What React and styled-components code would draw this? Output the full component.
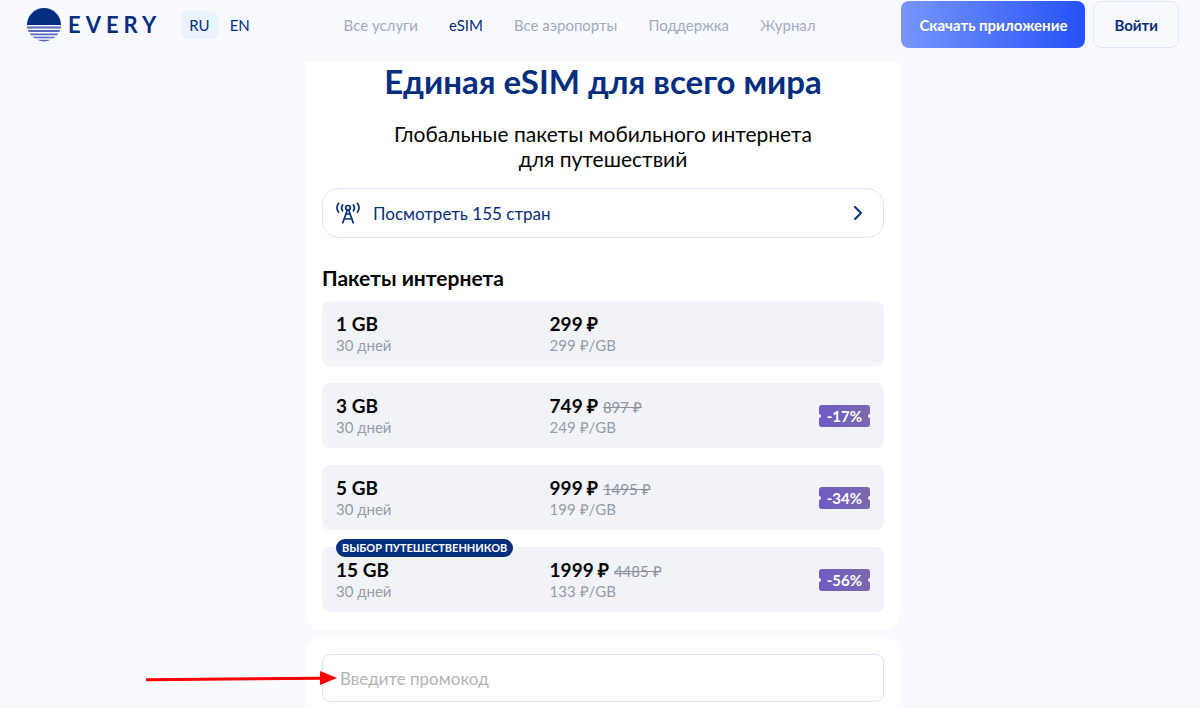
import React from "react";
import styled, { createGlobalStyle, css } from "styled-components";

const navy = "#042e80";

const GlobalStyle = createGlobalStyle`
  *, *::before, *::after { box-sizing: border-box; }
  html { scrollbar-width: none; }
  body {
    margin: 0;
    background: #f9faff;
    color: #050505;
    font-family: Lato, "Liberation Sans", sans-serif;
  }
  button, input { font-family: inherit; }
  a { color: inherit; text-decoration: none; }
  h1, h2, p, ul { margin: 0; padding: 0; }
  ul { list-style: none; }
`;

const Header = styled.header`
  position: sticky;
  top: 0;
  z-index: 5;
  display: flex;
  align-items: center;
  justify-content: space-between;
  height: 62px;
  padding: 0 21px 13px 27px;
  background: #f9faff;
`;

const Group = styled.div`
  display: flex;
  align-items: center;
  gap: ${(p) => p.$gap}px;
`;

const Logo = styled.a`
  display: flex;
  align-items: center;
  gap: 7px;
  color: ${navy};
  font: 700 22px/32px Lato, sans-serif;
  letter-spacing: 5px;
`;

const Languages = styled.div`
  display: flex;
  gap: 4px;
`;

const Language = styled.button`
  height: 28px;
  padding: 0 8px;
  border: 0;
  border-radius: 6px;
  background: ${(p) => (p.$active ? "#ebf3fe" : "transparent")};
  color: ${navy};
  font-size: 15px;
  line-height: 28px;
`;

const Nav = styled.nav`
  display: flex;
  gap: 31px;
`;

const NavLink = styled.a`
  color: ${(p) => (p.$active ? navy : "#a0abc0")};
  font-size: 15px;
  line-height: 20px;
`;

const Button = styled.button`
  height: 47px;
  padding: 0 20px;
  border: 1px solid #e6e6fa;
  border-radius: 8px;
  background: transparent;
  color: ${navy};
  font-size: 15px;
  font-weight: 700;
  ${(p) =>
    p.$primary &&
    css`
      padding: 0 18px;
      border: 0;
      background: linear-gradient(90deg, #7896fb, #2551f7);
      color: #fff;
    `}
`;

const Page = styled.div`
  padding-left: 5px;
`;

const Main = styled.main`
  display: flex;
  flex-direction: column;
  gap: 8px;
  max-width: 595px;
  margin: 0 auto;
`;

const Card = styled.section`
  position: relative;
  padding: ${(p) => (p.$first ? "0 16px 17px 17px" : "17px 16px 17px 17px")};
  border-radius: ${(p) => (p.$first ? "0 0 17px 17px" : "17px")};
  background: #fff;
`;

const Title = styled.h1`
  color: ${navy};
  font-size: 33px;
  line-height: 39px;
  font-weight: 700;
  text-align: center;
`;

const Lead = styled.p`
  max-width: 430px;
  margin: 20px auto 17px;
  font-size: 21px;
  line-height: 25px;
  text-align: center;
`;

const Countries = styled.button`
  display: flex;
  align-items: center;
  gap: 13px;
  width: 100%;
  height: 50px;
  padding: 0 18px 0 13px;
  border: 1px solid #e2e2f6;
  border-radius: 17px;
  background: #fff;
  color: ${navy};
  font-size: 17px;
  text-align: left;
`;

const CountriesText = styled.span`
  flex: 1;
`;

const Subtitle = styled.h2`
  margin: 27px 0 11px;
  font-size: 21px;
  line-height: 25px;
  font-weight: 700;
`;

const Plans = styled.ul`
  display: grid;
  gap: 17px;
`;

const Plan = styled.li`
  position: relative;
  display: grid;
  grid-template-columns: 2fr 2fr 1fr;
  align-items: center;
  height: 65px;
  padding: 0 14px;
  border-radius: 8px;
  background: #f2f3f9;
`;

const PlanMain = styled.p`
  font-size: 19px;
  line-height: 22px;
  font-weight: 700;
`;

const PlanNote = styled.p`
  color: #969ba6;
  font-size: 15px;
  line-height: 20px;
`;

const OldPrice = styled.s`
  color: #8c919c;
  font-size: 15px;
  line-height: 15px;
  font-weight: 400;
`;

const Discount = styled.span`
  justify-self: end;
  position: relative;
  padding: 0 8px;
  border-radius: 3px;
  background: linear-gradient(90deg, #6f5bc4, #7a69ad);
  color: #fff;
  font-size: 15px;
  line-height: 22px;
  font-weight: 700;

  &::before,
  &::after {
    content: "";
    position: absolute;
    top: 9px;
    width: 4px;
    height: 4px;
    border-radius: 2px;
    background: #f2f3f9;
  }
  &::before { left: -2px; }
  &::after { right: -2px; }
`;

const Choice = styled.span`
  position: absolute;
  top: -8px;
  left: 14px;
  padding: 0 6px;
  border-radius: 9px;
  background: ${navy};
  color: #fff;
  font-size: 11px;
  line-height: 18px;
  font-weight: 700;
  text-transform: uppercase;
`;

const Promo = styled.input`
  display: block;
  width: 100%;
  height: 48px;
  padding: 0 17px;
  border: 1px solid #e2e2f6;
  border-radius: 8px;
  background: #fff;
  font-size: 17px;
  &::placeholder { color: #b4b4b4; opacity: 1; }
`;

const Pointer = styled.svg`
  position: absolute;
  top: 33px;
  right: 100%;
  margin-right: -32px;
`;

const nav = ["Все услуги", "eSIM", "Все аэропорты", "Поддержка", "Журнал"];

const plans = [
  { size: "1 GB", price: "299 ₽", unit: "299 ₽/GB" },
  { size: "3 GB", price: "749 ₽", old: "897 ₽", unit: "249 ₽/GB", off: "-17%" },
  { size: "5 GB", price: "999 ₽", old: "1495 ₽", unit: "199 ₽/GB", off: "-34%" },
  { size: "15 GB", price: "1999 ₽", old: "4485 ₽", unit: "133 ₽/GB", off: "-56%", best: true },
];

function LogoMark() {
  return (
    <svg width="34" height="34" viewBox="0 0 34 34" aria-hidden="true">
      <path d="M0 17a17 17 0 0 1 34 0z" fill={navy} />
      <g fill="#5468bd">
        <path d="M0 18.6h34l-.3 1.9H.3z" />
        <path d="M1 22.1h32l-.8 1.8H1.8z" />
        <path d="M2.7 25.5h28.6l-1.3 1.7H4z" />
        <path d="M5.4 28.7h23.2l-2.2 1.6H7.6z" />
        <path d="M10 31.8h14Q17 35.4 10 31.8z" />
      </g>
    </svg>
  );
}

function TowerIcon() {
  return (
    <svg width="24" height="22" viewBox="0 0 24 22" fill="none" stroke={navy} strokeWidth="1.7" strokeLinecap="round" strokeLinejoin="round" aria-hidden="true">
      <path d="M2.6 1.3c-2.2 3-2.2 6 0 9M6.6 3c-1.400 1.900-1.400 3.900 0 5.800M21.400 1.300c2.200 3 2.200 6 0 9M17.400 3c1.400 1.900 1.400 3.900 0 5.800" />
      <circle cx="12" cy="5.800" r="2.300" />
      <path d="M11.200 8.200 6.800 20.800M12.800 8.200l4.400 12.600M9.800 12h4.400M8.200 17h7.600" />
    </svg>
  );
}

export default function App() {
  return (
    <>
      <GlobalStyle />
      <Header>
        <Group $gap={20}>
          <Logo href="#">
            <LogoMark />
            EVERY
          </Logo>
          <Languages>
            <Language $active>RU</Language>
            <Language>EN</Language>
          </Languages>
        </Group>
        <Nav>
          {nav.map((label) => (
            <NavLink key={label} href="#" $active={label === "eSIM"}>
              {label}
            </NavLink>
          ))}
        </Nav>
        <Group $gap={8}>
          <Button $primary>Скачать приложение</Button>
          <Button>Войти</Button>
        </Group>
      </Header>
      <Page>
        <Main>
          <Card $first>
            <Title>Единая eSIM для всего мира</Title>
            <Lead>Глобальные пакеты мобильного интернета для путешествий</Lead>
            <Countries>
              <TowerIcon />
              <CountriesText>Посмотреть 155 стран</CountriesText>
              <svg width="14" height="16" viewBox="0 0 14 16" fill="none" stroke={navy} strokeWidth="2" strokeLinecap="round" strokeLinejoin="round" aria-hidden="true">
                <path d="m4 2 6 6-6 6" />
              </svg>
            </Countries>
            <Subtitle>Пакеты интернета</Subtitle>
            <Plans>
              {plans.map((plan) => (
                <Plan key={plan.size}>
                  {plan.best && <Choice>Выбор путешественников</Choice>}
                  <div>
                    <PlanMain>{plan.size}</PlanMain>
                    <PlanNote>30 дней</PlanNote>
                  </div>
                  <div>
                    <PlanMain>
                      {plan.price} {plan.old && <OldPrice>{plan.old}</OldPrice>}
                    </PlanMain>
                    <PlanNote>{plan.unit}</PlanNote>
                  </div>
                  {plan.off && <Discount>{plan.off}</Discount>}
                </Plan>
              ))}
            </Plans>
          </Card>
          <Card>
            <Promo type="text" placeholder="Введите промокод" aria-label="Введите промокод" />
            <Pointer width="191" height="16" viewBox="0 0 191 16" aria-hidden="true">
              <path d="M0 9.800 175 8.300" stroke="#fe0000" strokeWidth="3" />
              <path d="M174 1v14l17-7z" fill="#fe0000" />
            </Pointer>
          </Card>
        </Main>
      </Page>
    </>
  );
}
